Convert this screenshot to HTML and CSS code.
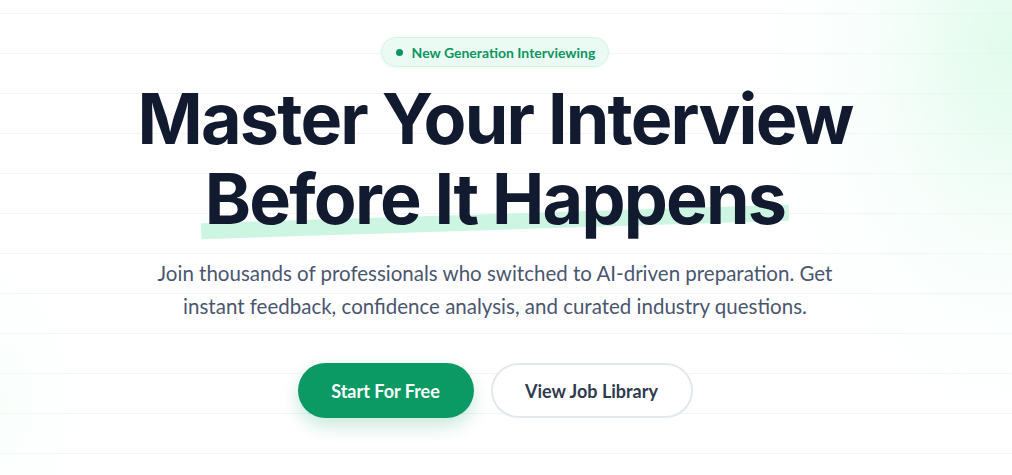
FILE: index.html
```html
<!DOCTYPE html>
<html lang="en">
<head>
  <meta charset="UTF-8">
  <title>Master Your Interview</title>
  <meta name="viewport" content="width=device-width,initial-scale=1">
  <link rel="stylesheet" href="styles.css">
</head>
<body>
  <section class="hero">
    <div class="badge"><span class="badge-dot"></span>New Generation Interviewing</div>
    <h1 class="title">
      Master Your Interview<br>
      <span class="mark">Before It Happens</span>
    </h1>
    <p class="lead">
      Join thousands of professionals who switched to AI-driven preparation. Get<br>
      instant feedback, confidence analysis, and curated industry questions.
    </p>
    <div class="actions">
      <a class="btn btn-primary" href="#">Start For Free</a>
      <a class="btn btn-ghost" href="#">View Job Library</a>
    </div>
  </section>
</body>
</html>
```

FILE: styles.css
```css
* {
  box-sizing: border-box;
}
html,
body {
  margin: 0;
  height: 100%;
}
body {
  font-family: "Lato", "Noto Sans", sans-serif;
  color: #0f172a;
  background-color: #fff;
  background-image:
    radial-gradient(ellipse 260px 380px at 100% 10%, rgba(214, 250, 230, 0.75) 0, rgba(236, 253, 245, 0.35) 55%, rgba(255, 255, 255, 0) 100%),
    radial-gradient(ellipse 90px 160px at 0% 85%, rgba(240, 253, 246, 0.4) 0, rgba(255, 255, 255, 0) 100%),
    repeating-linear-gradient(to bottom, transparent 0, transparent 13px, #f4f5f6 13px, #f4f5f6 14px, transparent 14px, transparent 40px);
  overflow: hidden;
}

/* content column sits a little left of the window centre */
.hero {
  display: flex;
  flex-direction: column;
  align-items: center;
  padding: 37px 22px 0 0;
  text-align: center;
}

.badge {
  display: inline-flex;
  align-items: center;
  gap: 9px;
  height: 30px;
  padding: 0 13px 0 14px;
  border: 1px solid #d1f5e3;
  border-radius: 15px;
  background: #ebfbf3;
  box-shadow: 0 1px 3px rgba(16, 185, 129, 0.08);
  color: #0b9660;
  font-size: 14px;
  font-weight: 700;
}
.badge-dot {
  width: 7px;
  height: 7px;
  border-radius: 50%;
  background: #0b9660;
}

.title {
  margin: 12px 0 0;
  font-family: "Inter", sans-serif;
  font-size: 70px;
  font-weight: 700;
  line-height: 80px;
  letter-spacing: -1.8px;
  color: #111a2e;
}
.mark {
  position: relative;
  z-index: 0;
}
.mark::after {
  content: "";
  position: absolute;
  z-index: -1;
  left: -4px;
  right: -4px;
  bottom: 11px;
  height: 16px;
  background: #cdf6e2;
  transform: rotate(-1.8deg);
}

.lead {
  margin: 18px 0 0;
  font-size: 20.5px;
  line-height: 33px;
  color: #4a5670;
}

.actions {
  display: flex;
  gap: 17px;
  margin-top: 40px;
}
.btn {
  display: inline-flex;
  align-items: center;
  justify-content: center;
  height: 55px;
  border-radius: 28px;
  font-size: 18px;
  font-weight: 700;
  text-decoration: none;
}
.btn-primary {
  width: 176px;
  background: #0b9964;
  color: #fff;
  box-shadow: 0 8px 18px rgba(11, 153, 100, 0.22);
}
.btn-ghost {
  width: 202px;
  border: 2px solid #e3e8ef;
  background: #fff;
  color: #2f3a4f;
}
```
